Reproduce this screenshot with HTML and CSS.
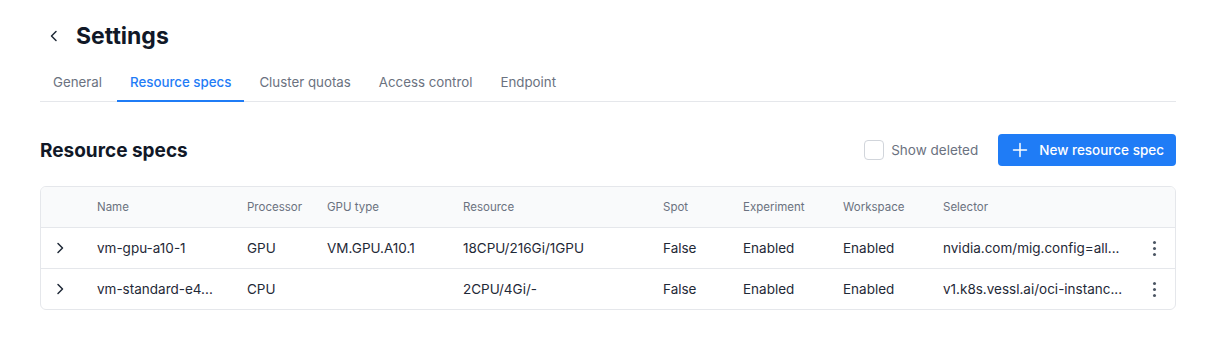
FILE: index.html
```html
<!DOCTYPE html>
<html lang="en">

<head>
    <meta charset="UTF-8">
    <meta name="viewport" content="width=device-width, initial-scale=1.0">
    <title>Settings</title>
    <link rel="stylesheet" href="styles.css">
</head>

<body>
    <div class="page">
        <div class="page-header">
            <button class="back-btn" type="button">
                <svg width="16" height="16" viewBox="0 0 16 16" fill="none">
                    <path d="M10 3.5L5.5 8L10 12.5" stroke="#1f2937" stroke-width="1.5" stroke-linecap="round" stroke-linejoin="round"/>
                </svg>
            </button>
            <h1>Settings</h1>
        </div>

        <div class="tabs">
            <a class="tab">General</a>
            <a class="tab active">Resource specs</a>
            <a class="tab">Cluster quotas</a>
            <a class="tab">Access control</a>
            <a class="tab">Endpoint</a>
        </div>

        <div class="section-header">
            <h2>Resource specs</h2>
            <div class="actions">
                <label class="checkbox">
                    <span class="box"></span>
                    Show deleted
                </label>
                <button class="primary-btn" type="button">
                    <svg width="16" height="16" viewBox="0 0 16 16" fill="none">
                        <path d="M8 1.5V14.5M1.5 8H14.5" stroke="#ffffff" stroke-width="1.5" stroke-linecap="round"/>
                    </svg>
                    New resource spec
                </button>
            </div>
        </div>

        <div class="table">
            <div class="row head">
                <div></div>
                <div>Name</div>
                <div>Processor</div>
                <div>GPU type</div>
                <div>Resource</div>
                <div>Spot</div>
                <div>Experiment</div>
                <div>Workspace</div>
                <div>Selector</div>
                <div></div>
            </div>
            <div class="row">
                <div class="expand">
                    <svg width="16" height="16" viewBox="0 0 16 16" fill="none">
                        <path d="M6 3.5L10.5 8L6 12.5" stroke="#1f2937" stroke-width="1.5" stroke-linecap="round" stroke-linejoin="round"/>
                    </svg>
                </div>
                <div>vm-gpu-a10-1</div>
                <div>GPU</div>
                <div>VM.GPU.A10.1</div>
                <div>18CPU/216Gi/1GPU</div>
                <div>False</div>
                <div>Enabled</div>
                <div>Enabled</div>
                <div>nvidia.com/mig.config=all...</div>
                <div class="more"><span></span><span></span><span></span></div>
            </div>
            <div class="row">
                <div class="expand">
                    <svg width="16" height="16" viewBox="0 0 16 16" fill="none">
                        <path d="M6 3.5L10.5 8L6 12.5" stroke="#1f2937" stroke-width="1.5" stroke-linecap="round" stroke-linejoin="round"/>
                    </svg>
                </div>
                <div>vm-standard-e4...</div>
                <div>CPU</div>
                <div></div>
                <div>2CPU/4Gi/-</div>
                <div>False</div>
                <div>Enabled</div>
                <div>Enabled</div>
                <div>v1.k8s.vessl.ai/oci-instanc...</div>
                <div class="more"><span></span><span></span><span></span></div>
            </div>
        </div>
    </div>
</body>

</html>
```

FILE: styles.css
```css
body {
    margin: 0;
    background-color: #ffffff;
    color: #1f2937;
    font-family: Inter, "Noto Sans", sans-serif;
}

.page {
    padding: 0 36px 0 40px;
}

.page-header {
    display: flex;
    align-items: center;
    height: 60px;
    padding: 6px 0 0 6px;
    gap: 14px;
}

.back-btn {
    display: flex;
    align-items: center;
    justify-content: center;
    width: 16px;
    height: 16px;
    padding: 0;
    border: none;
    background: none;
    cursor: pointer;
}

.page-header h1 {
    margin: 0;
    font-size: 23px;
    font-weight: 700;
    color: #111827;
}

.tabs {
    display: flex;
    border-bottom: 1px solid #e5e7eb;
}

.tab {
    padding: 6px 13px 8px;
    font-size: 13.3px;
    line-height: 20px;
    color: #6b7280;
    border-bottom: 2px solid transparent;
    margin-bottom: -1px;
    margin-right: 2px;
    cursor: pointer;
}

.tab.active {
    color: #1f7cf6;
    font-weight: 500;
    border-bottom-color: #1f7cf6;
}

.section-header {
    display: flex;
    align-items: center;
    justify-content: space-between;
    margin-top: 32px;
}

.section-header h2 {
    margin: 0;
    font-size: 19px;
    font-weight: 700;
    color: #111827;
}

.actions {
    display: flex;
    align-items: center;
    gap: 20px;
}

.checkbox {
    display: flex;
    align-items: center;
    gap: 7px;
    font-size: 13.5px;
    color: #6b7280;
}

.checkbox .box {
    width: 18px;
    height: 18px;
    border: 1px solid #d1d5db;
    border-radius: 4px;
}

.primary-btn {
    display: flex;
    align-items: center;
    gap: 11px;
    height: 32px;
    padding: 0 12px 0 14px;
    border: none;
    border-radius: 4px;
    background-color: #1f7cf6;
    color: #ffffff;
    font-family: inherit;
    font-size: 13.5px;
    font-weight: 500;
    cursor: pointer;
}

.table {
    margin-top: 20px;
    border: 1px solid #e5e7eb;
    border-radius: 6px;
    overflow: hidden;
}

.row {
    display: grid;
    grid-template-columns: 56px 150px 80px 136px 200px 80px 100px 100px 190px 42px;
    align-items: center;
    height: 40px;
    font-size: 13.5px;
    color: #1f2937;
    border-top: 1px solid #e5e7eb;
    white-space: nowrap;
}

.row.head {
    border-top: none;
    background-color: #f9fafb;
    font-size: 11.5px;
    color: #6b7280;
}

.expand {
    display: flex;
    padding-left: 11px;
}

.more {
    display: flex;
    flex-direction: column;
    align-items: center;
    gap: 3px;
}

.more span {
    width: 3px;
    height: 3px;
    border-radius: 50%;
    background-color: #4b5563;
}
```
